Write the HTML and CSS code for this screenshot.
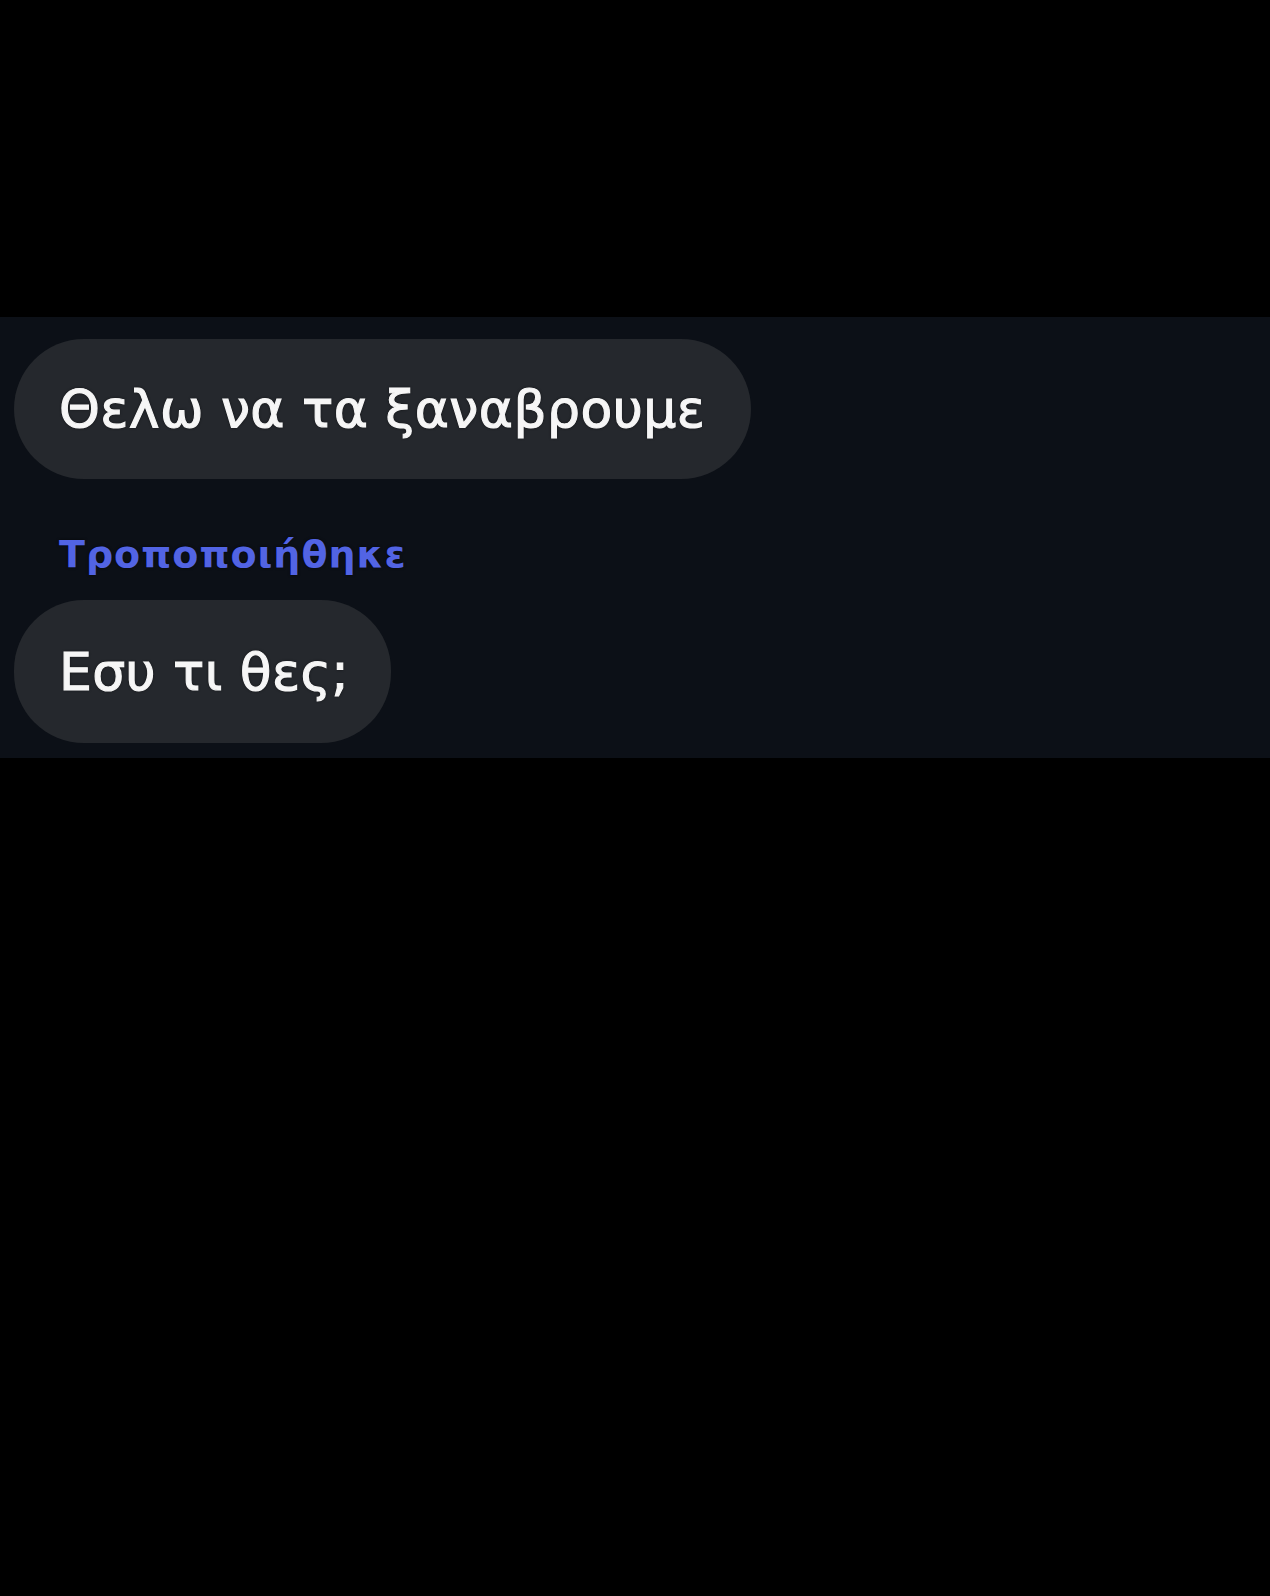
FILE: index.html
```html
<!DOCTYPE html>
<html lang="el">
<head>
<meta charset="utf-8">
<link rel="stylesheet" href="styles.css">
</head>
<body>
<div class="top"></div>
<section class="band">
  <div class="bubble b1"><span>Θελω να τα ξαναβρουμε</span></div>
  <div class="label">Τροποποιήθηκε</div>
  <div class="bubble b2"><span>Εσυ τι θες;</span></div>
</section>
</body>
</html>
```
FILE: styles.css
```css
html, body {
  margin: 0;
  padding: 0;
  background: #000;
}
body {
  width: 1270px;
  height: 1596px;
  overflow: hidden;
  font-family: "DejaVu Sans", "Noto Sans", sans-serif;
}
.top {
  height: 317px;
}
.band {
  background: #0c1017;
  height: 441px;
  box-sizing: border-box;
  padding: 22px 0 0 14px;
  display: flex;
  flex-direction: column;
  align-items: flex-start;
}
.bubble {
  background: #25282d;
  height: 140px;
  border-radius: 70px;
  display: flex;
  align-items: center;
  padding: 0 46px 0 45px;
  box-sizing: border-box;
  color: #f6f6f6;
  font-size: 52px;
  letter-spacing: 0.4px;
  -webkit-text-stroke: 1.1px #f6f6f6;
  text-shadow: 0 0 3px rgba(0,0,0,0.8);
}
.label {
  color: #5264e4;
  font-weight: 700;
  font-size: 38px;
  letter-spacing: 1px;
  margin: 53px 0 24px 45px;
  line-height: 44px;
  text-shadow: 0 0 3px rgba(0,0,0,0.7);
}
.b2 {
  height: 143px;
  padding-right: 42px;
}
```
